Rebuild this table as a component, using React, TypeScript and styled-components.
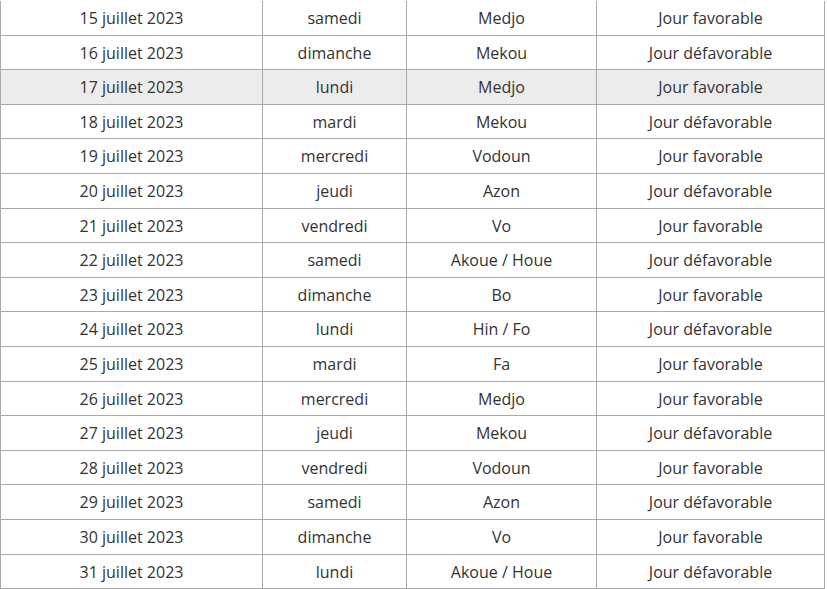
import React from 'react';
import styled, { createGlobalStyle } from 'styled-components';

interface DayRow {
  date: string;
  weekday: string;
  deity: string;
  favorable: boolean;
}

const GlobalStyle = createGlobalStyle`
  html, body {
    margin: 0;
    padding: 0;
    background: #ffffff;
  }
  body {
    font-family: "Open Sans", "Noto Sans", sans-serif;
    overflow: hidden;
  }
`;

const Wrapper = styled.div`
  width: 824px;
  padding-top: 1px;
`;

const Table = styled.table`
  width: 824px;
  border-collapse: collapse;
  table-layout: fixed;
  border-top: hidden;
`;

const Col = styled.col<{ $w: number }>`
  width: ${(p) => p.$w}px;
`;

const Tr = styled.tr<{ $highlight?: boolean }>`
  background-color: ${(p) => (p.$highlight ? '#ececec' : '#ffffff')};
`;

const Td = styled.td`
  border: 1px solid #aaaaaa;
  padding: 6px 8px 4px;
  font-size: 16px;
  line-height: 23.6px;
  color: #333333;
  text-align: center;
  white-space: nowrap;
`;

const weekdays = ['samedi', 'dimanche', 'lundi', 'mardi', 'mercredi', 'jeudi', 'vendredi'];

const deities = [
  'Medjo', 'Mekou', 'Medjo', 'Mekou', 'Vodoun', 'Azon', 'Vo', 'Akoue / Houe', 'Bo',
  'Hin / Fo', 'Fa', 'Medjo', 'Mekou', 'Vodoun', 'Azon', 'Vo', 'Akoue / Houe',
];

const favorables = [
  true, false, true, false, true, false, true, false, true, false, true,
  true, false, true, false, true, false,
];

const rows: DayRow[] = deities.map((deity, i) => ({
  date: `${15 + i} juillet 2023`,
  weekday: weekdays[i % 7],
  deity,
  favorable: favorables[i],
}));

const App: React.FC = () => {
  return (
    <>
      <GlobalStyle />
      <Wrapper>
        <Table>
          <colgroup>
            <Col $w={262} />
            <Col $w={144} />
            <Col $w={190} />
            <Col $w={228} />
          </colgroup>
          <tbody>
            {rows.map((row, i) => (
              <Tr key={row.date} $highlight={i === 2}>
                <Td>{row.date}</Td>
                <Td>{row.weekday}</Td>
                <Td>{row.deity}</Td>
                <Td>{row.favorable ? 'Jour favorable' : 'Jour défavorable'}</Td>
              </Tr>
            ))}
          </tbody>
        </Table>
      </Wrapper>
    </>
  );
};

export default App;
